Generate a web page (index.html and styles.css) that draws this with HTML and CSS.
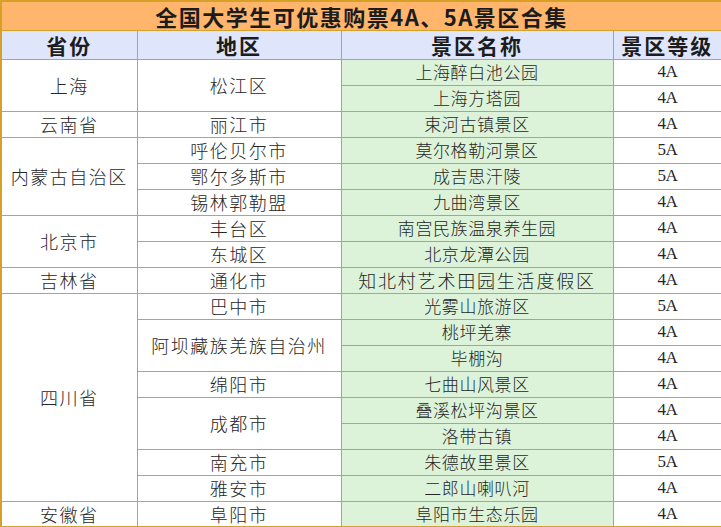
FILE: index.html
```html
<!DOCTYPE html>
<html lang="zh-CN">
<head>
<meta charset="utf-8">
<title>全国大学生可优惠购票4A、5A景区合集</title>
<link rel="stylesheet" href="styles.css">
</head>
<body>
<table class="sheet">
  <colgroup>
    <col class="c-prov">
    <col class="c-area">
    <col class="c-name">
    <col class="c-level">
  </colgroup>
  <thead>
    <tr class="title-row"><th colspan="4" class="title">全国大学生可优惠购票4A、5A景区合集</th></tr>
    <tr class="head-row">
      <th class="head">省份</th>
      <th class="head">地区</th>
      <th class="head">景区名称</th>
      <th class="head">景区等级</th>
    </tr>
  </thead>
  <tbody>
    <tr><td rowspan="2" class="txt">上海</td><td rowspan="2" class="txt">松江区</td><td class="name">上海醉白池公园</td><td class="lvl">4A</td></tr>
    <tr><td class="name">上海方塔园</td><td class="lvl">4A</td></tr>
    <tr><td class="txt">云南省</td><td class="txt">丽江市</td><td class="name">束河古镇景区</td><td class="lvl">4A</td></tr>
    <tr><td rowspan="3" class="txt">内蒙古自治区</td><td class="txt">呼伦贝尔市</td><td class="name">莫尔格勒河景区</td><td class="lvl">5A</td></tr>
    <tr><td class="txt">鄂尔多斯市</td><td class="name">成吉思汗陵</td><td class="lvl">5A</td></tr>
    <tr><td class="txt">锡林郭勒盟</td><td class="name">九曲湾景区</td><td class="lvl">4A</td></tr>
    <tr><td rowspan="2" class="txt">北京市</td><td class="txt">丰台区</td><td class="name">南宫民族温泉养生园</td><td class="lvl">4A</td></tr>
    <tr><td class="txt">东城区</td><td class="name">北京龙潭公园</td><td class="lvl">4A</td></tr>
    <tr><td class="txt">吉林省</td><td class="txt">通化市</td><td class="name wide">知北村艺术田园生活度假区</td><td class="lvl">4A</td></tr>
    <tr><td rowspan="8" class="txt">四川省</td><td class="txt">巴中市</td><td class="name">光雾山旅游区</td><td class="lvl">5A</td></tr>
    <tr><td rowspan="2" class="txt">阿坝藏族羌族自治州</td><td class="name">桃坪羌寨</td><td class="lvl">4A</td></tr>
    <tr><td class="name">毕棚沟</td><td class="lvl">4A</td></tr>
    <tr><td class="txt">绵阳市</td><td class="name">七曲山风景区</td><td class="lvl">4A</td></tr>
    <tr><td rowspan="2" class="txt">成都市</td><td class="name">叠溪松坪沟景区</td><td class="lvl">4A</td></tr>
    <tr><td class="name">洛带古镇</td><td class="lvl">4A</td></tr>
    <tr><td class="txt">南充市</td><td class="name">朱德故里景区</td><td class="lvl">5A</td></tr>
    <tr><td class="txt">雅安市</td><td class="name">二郎山喇叭河</td><td class="lvl">4A</td></tr>
    <tr><td class="txt">安徽省</td><td class="txt">阜阳市</td><td class="name">阜阳市生态乐园</td><td class="lvl">4A</td></tr>
  </tbody>
</table>
</body>
</html>
```

FILE: styles.css
```css
html, body {
  margin: 0;
  padding: 0;
  background: #ffffff;
}

.sheet {
  width: 721px;
  table-layout: fixed;
  border-collapse: collapse;
  border: 2px solid #d6a126;
  font-family: "Noto Sans CJK SC", "Noto Sans", sans-serif;
  color: #262626;
}

.c-prov { width: 136px; }
.c-area { width: 204px; }
.c-name { width: 272px; }
.c-level { width: 109px; }

.sheet th,
.sheet td {
  border: 1px solid #d6a126;
  padding: 0;
  text-align: center;
  vertical-align: middle;
  white-space: nowrap;
}

.title-row { height: 29px; }
.head-row { height: 29px; }
.sheet tbody tr { height: 26px; }

.title {
  background: #ffb56c;
  font-size: 22px;
  font-weight: 700;
  letter-spacing: 1.5px;
  color: #1c1c1c;
  line-height: 26px;
  border-color: #e6a43c;
}

.head {
  background: #dfe6fb;
  font-size: 21px;
  font-weight: 700;
  letter-spacing: 2px;
  color: #1c1c1c;
  line-height: 26px;
}

.txt {
  font-size: 18px;
  letter-spacing: 1.5px;
  line-height: 24px;
  background: #ffffff;
  font-weight: 300;
}

.name {
  background: #dcf3da;
  font-size: 17px;
  letter-spacing: 0.6px;
  line-height: 24px;
  font-weight: 300;
}

.name.wide {
  font-size: 18px;
  letter-spacing: 1.8px;
}

.lvl {
  background: #ffffff;
  font-family: "Liberation Serif", "DejaVu Serif", serif;
  font-size: 17px;
  letter-spacing: -0.5px;
  line-height: 24px;
}
```
